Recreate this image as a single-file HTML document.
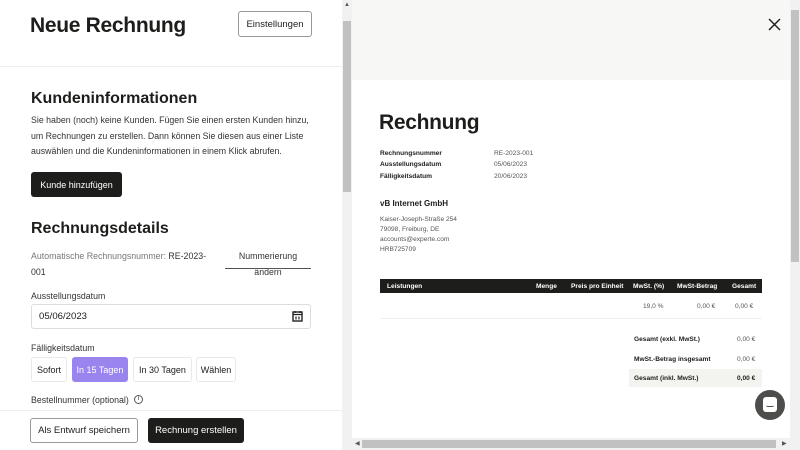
<!DOCTYPE html>
<html><head><meta charset="utf-8"><style>
*{box-sizing:border-box;margin:0;padding:0}
body{width:800px;height:450px;overflow:hidden;position:relative;font-family:"Liberation Sans",sans-serif;color:#1d1d1b;background:#fff}
.a{position:absolute;white-space:nowrap}
.btn{position:absolute;border-radius:3px;font-size:9.5px;display:flex;align-items:center;justify-content:center}
.dark{background:#1d1d1b;color:#fff}
.out{border:1px solid #999;background:#fff;color:#1d1d1b}
.sm{font-size:6.6px}
.b{font-weight:bold}
.t{font-size:8.8px}
</style></head><body>
<div class="a" style="left:30px;top:14px;font-size:21px;font-weight:bold;letter-spacing:-0.3px">Neue Rechnung</div>
<div class="btn out" style="left:238px;top:11px;width:74px;height:26px;font-size:9.5px">Einstellungen</div>
<div class="a" style="left:0;top:66px;width:342px;height:1px;background:#eee"></div>
<div class="a" style="left:31px;top:90px;font-size:16px;font-weight:bold">Kundeninformationen</div>
<div class="a t" style="left:31px;top:113px;line-height:15.5px;color:#333">Sie haben (noch) keine Kunden. Fügen Sie einen ersten Kunden hinzu,<br>um Rechnungen zu erstellen. Dann können Sie diesen aus einer Liste<br>auswählen und die Kundeninformationen in einem Klick abrufen.</div>
<div class="btn dark" style="left:31px;top:172px;width:91px;height:25px;font-size:9px">Kunde hinzufügen</div>
<div class="a" style="left:31px;top:220px;font-size:16px;font-weight:bold">Rechnungsdetails</div>
<div class="a t" style="left:31px;top:249px;line-height:15.5px;color:#777">Automatische Rechnungsnummer: <span style="color:#333">RE-2023-</span><br><span style="color:#333">001</span></div>
<div class="a t" style="left:225px;top:249px;width:86px;text-align:center;line-height:15.5px;color:#333">Nummerierung<br>ändern</div>
<div class="a" style="left:225px;top:268px;width:86px;height:1px;background:#555"></div>
<div class="a t" style="left:31px;top:291px;color:#333">Ausstellungsdatum</div>
<div class="a" style="left:31px;top:304px;width:280px;height:25px;border:1px solid #ddd;border-radius:3px"></div>
<div class="a" style="left:39px;top:311px;font-size:9.6px">05/06/2023</div>
<svg class="a" style="left:292px;top:310px" width="11" height="12" viewBox="0 0 11 12"><rect x="1" y="2" width="9" height="9" fill="none" stroke="#222" stroke-width="1.4"/><path d="M1 4.5h9M3 1v2M8 1v2M4 6.5v3M7 6.5v3" stroke="#222" stroke-width="1.2"/></svg>
<div class="a t" style="left:31px;top:343px;color:#333">Fälligkeitsdatum</div>
<div class="btn out" style="left:31px;top:357px;width:36px;height:25px;border-color:#e8e8e8;font-size:9px">Sofort</div>
<div class="btn" style="left:72px;top:357px;width:56px;height:25px;background:#9a84ee;color:#fff;font-size:9px">In 15 Tagen</div>
<div class="btn out" style="left:133px;top:357px;width:59px;height:25px;border-color:#e8e8e8;font-size:9px">In 30 Tagen</div>
<div class="btn out" style="left:196px;top:357px;width:40px;height:25px;border-color:#e8e8e8;font-size:9px">Wählen</div>
<div class="a t" style="left:31px;top:395px;color:#333">Bestellnummer (optional)</div>
<div class="a" style="left:134px;top:395px;width:9px;height:9px;border:1px solid #555;border-radius:50%;font-size:6px;text-align:center;line-height:7px">i</div>
<div class="a" style="left:0;top:410px;width:342px;height:40px;background:#fff;border-top:1px solid #eee"></div>
<div class="btn out" style="left:30px;top:418px;width:108px;height:25px">Als Entwurf speichern</div>
<div class="btn dark" style="left:148px;top:418px;width:96px;height:25px">Rechnung erstellen</div>
<div class="a" style="left:342px;top:0;width:10px;height:450px;background:#f1f1f1"></div>
<div class="a" style="left:343px;top:21px;width:8px;height:171px;background:#c1c1c1"></div>
<div class="a" style="left:344px;top:2px;font-size:6px;color:#555">▲</div>
<div class="a" style="left:352px;top:0;width:438px;height:80px;background:#f7f7f5"></div>
<svg class="a" style="left:768px;top:18px" width="13" height="13" viewBox="0 0 13 13"><path d="M1 1L12 12M12 1L1 12" stroke="#222" stroke-width="1.5"/></svg>
<div class="a" style="left:379px;top:111px;font-size:21px;font-weight:bold;letter-spacing:-0.3px">Rechnung</div>
<div class="a sm b" style="left:380px;top:148px;line-height:11.3px">Rechnungsnummer<br>Ausstellungsdatum<br>Fälligkeitsdatum</div>
<div class="a sm" style="left:494px;top:148px;line-height:11.3px;color:#555">RE-2023-001<br>05/06/2023<br>20/06/2023</div>
<div class="a b" style="left:380px;top:199px;font-size:8px">vB Internet GmbH</div>
<div class="a sm" style="left:380px;top:215px;line-height:10.1px;color:#555">Kaiser-Joseph-Straße 254<br>79098, Freiburg, DE<br>accounts@experte.com<br>HRB725709</div>
<div class="a" style="left:380px;top:279px;width:382px;height:14px;background:#1d1d1b"></div>
<div class="a sm b" style="left:387px;top:283px;color:#fff">Leistungen</div>
<div class="a sm b" style="left:536px;top:283px;color:#fff">Menge</div>
<div class="a sm b" style="left:571px;top:283px;color:#fff">Preis pro Einheit</div>
<div class="a sm b" style="left:633px;top:283px;color:#fff">MwSt. (%)</div>
<div class="a sm b" style="left:677px;top:283px;color:#fff">MwSt-Betrag</div>
<div class="a sm b" style="left:732px;top:283px;color:#fff">Gesamt</div>
<div class="a sm" style="left:643px;top:303px;color:#555">19,0 %</div>
<div class="a sm" style="left:697px;top:303px;color:#555">0,00 €</div>
<div class="a sm" style="left:735px;top:303px;color:#555">0,00 €</div>
<div class="a" style="left:380px;top:318px;width:382px;height:1px;background:#f0f0f0"></div>
<div class="a sm b" style="left:634px;top:336px">Gesamt (exkl. MwSt.)</div>
<div class="a sm" style="left:737px;top:336px;color:#555">0,00 €</div>
<div class="a sm b" style="left:634px;top:356px">MwSt.-Betrag insgesamt</div>
<div class="a sm" style="left:737px;top:356px;color:#555">0,00 €</div>
<div class="a" style="left:629px;top:369px;width:133px;height:18px;background:#f3f3f0"></div>
<div class="a sm b" style="left:634px;top:375px">Gesamt (inkl. MwSt.)</div>
<div class="a sm b" style="left:737px;top:375px">0,00 €</div>
<div class="a" style="left:755px;top:390px;width:30px;height:30px;border-radius:50%;background:#4d4d4b"></div>
<div class="a" style="left:763px;top:397px;width:14px;height:15px;background:#fff;border-radius:3px"></div>
<div class="a" style="left:766px;top:405px;width:8px;height:2px;border-bottom:1px solid #4d4d4b;border-radius:0 0 4px 4px"></div>
<div class="a" style="left:790px;top:0;width:10px;height:438px;background:#f1f1f1"></div>
<div class="a" style="left:791px;top:10px;width:8px;height:252px;background:#c1c1c1"></div>
<div class="a" style="left:352px;top:438px;width:448px;height:12px;background:#f1f1f1"></div>
<div class="a" style="left:362px;top:440px;width:414px;height:8px;background:#c1c1c1"></div>
<div class="a" style="left:355px;top:440px;font-size:6px;color:#555">◀</div>
<div class="a" style="left:782px;top:440px;font-size:6px;color:#555">▶</div>
</body></html>
